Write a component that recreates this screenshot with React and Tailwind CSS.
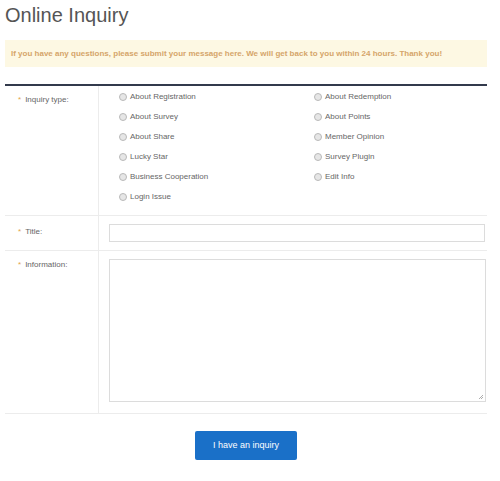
import React from "react";

const left = ["About Registration", "About Survey", "About Share", "Lucky Star", "Business Cooperation", "Login Issue"];
const right = ["About Redemption", "About Points", "Member Opinion", "Survey Plugin", "Edit Info"];

function Radio({ label }) {
  return (
    <div className="flex h-[20px] items-center">
      <span className="mr-[3px] h-[8px] w-[8px] rounded-full border border-[#b9b9b9] bg-[#e6e6e6]" />
      <span className="text-[8px] leading-none text-[#666]">{label}</span>
    </div>
  );
}

function Label({ text, pt }) {
  return (
    <div className={`w-[94px] shrink-0 border-r border-[#ececec] pl-[13px] ${pt}`}>
      <div className="flex items-center text-[8px] leading-[10px] text-[#666]">
        <span className="mr-[4px] text-[#e2a54a]">*</span>
        <span>{text}</span>
      </div>
    </div>
  );
}

export default function App() {
  return (
    <div className="h-[481px] w-[500px] bg-white" style={{ fontFamily: '"Liberation Sans", Arial, sans-serif' }}>
      <div className="ml-[5px] w-[482px]">
        <h1 className="pt-[3px] text-[20px] leading-[24px] font-normal text-[#555]">Online Inquiry</h1>
        <div className="mt-[13px] flex h-[27px] items-center bg-[#fdf8e3] pl-[6px] text-[8px] font-bold text-[#d5a56a]">
          If you have any questions, please submit your message here. We will get back to you within 24 hours. Thank you!
        </div>
        <div className="mt-[17px] h-[2px] bg-[#333a4c]" />
        <div className="flex border-b border-[#ececec]">
          <Label text="Inquiry type:" pt="pt-[9px]" />
          <div className="grid w-[388px] grid-cols-[195px_1fr] pl-[20px] pt-[1px] pb-[8px]">
            <div>
              {left.map((l) => (
                <Radio key={l} label={l} />
              ))}
            </div>
            <div>
              {right.map((l) => (
                <Radio key={l} label={l} />
              ))}
            </div>
          </div>
        </div>
        <div className="flex border-b border-[#ececec]">
          <Label text="Title:" pt="pt-[11px]" />
          <div className="flex-1 py-[8px] pl-[10px] pr-[2px]">
            <div className="h-[18px] w-[376px] border border-[#dcdcdc]" />
          </div>
        </div>
        <div className="flex border-b border-[#ececec]">
          <Label text="Information:" pt="pt-[9px]" />
          <div className="flex-1 pt-[8px] pb-[11px] pl-[10px]">
            <div className="relative h-[143px] w-[377px] border border-[#dcdcdc]">
              <svg className="absolute bottom-[1px] right-[1px]" width="6" height="6" viewBox="0 0 6 6">
                <path d="M5 1 L1 5 M5 3 L3 5" stroke="#999" strokeWidth="0.8" />
              </svg>
            </div>
          </div>
        </div>
        <div className="flex justify-center pt-[17px]">
          <button className="h-[29px] w-[102px] rounded-[2px] bg-[#1a70c8] text-[9px] text-white">I have an inquiry</button>
        </div>
      </div>
    </div>
  );
}
